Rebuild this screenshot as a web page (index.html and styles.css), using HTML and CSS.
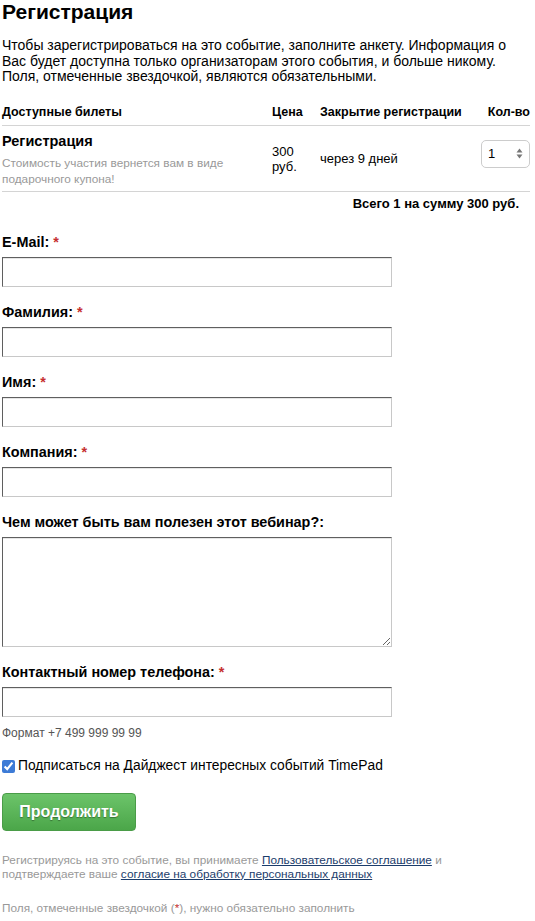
FILE: index.html
```html
<!DOCTYPE html>
<html lang="ru">
<head>
<meta charset="utf-8">
<title>Регистрация</title>
<link rel="stylesheet" href="styles.css">
</head>
<body>
<div class="page">
  <h1 class="title">Регистрация</h1>
  <p class="intro">Чтобы зарегистрироваться на это событие, заполните анкету. Информация о Вас будет доступна только организаторам этого события, и больше никому. Поля, отмеченные звездочкой, являются обязательными.</p>

  <table class="tickets">
    <colgroup>
      <col class="c-name"><col class="c-price"><col class="c-date"><col class="c-qty">
    </colgroup>
    <thead>
      <tr>
        <th>Доступные билеты</th>
        <th>Цена</th>
        <th>Закрытие регистрации</th>
        <th class="qty-h">Кол-во</th>
      </tr>
    </thead>
    <tbody>
      <tr>
        <td class="t-name">
          <div class="t-title">Регистрация</div>
          <div class="t-desc">Стоимость участия вернется вам в виде подарочного купона!</div>
        </td>
        <td class="t-price">300<br>руб.</td>
        <td class="t-date">через 9 дней</td>
        <td class="t-qty">
          <div class="qty-select"><span class="qty-val">1</span>
            <svg class="qty-arrows" width="7" height="11" viewBox="0 0 7 11"><path d="M3.5 0.5 L6.5 4.5 L0.5 4.5 Z" fill="#777"/><path d="M3.5 10.5 L6.5 6.5 L0.5 6.5 Z" fill="#777"/></svg>
          </div>
        </td>
      </tr>
    </tbody>
  </table>
  <div class="total">Всего 1 на сумму 300 руб.</div>

  <form class="form">
    <div class="field">
      <label class="label">E-Mail: <span class="req">*</span></label>
      <input class="input" type="text">
    </div>
    <div class="field">
      <label class="label">Фамилия: <span class="req">*</span></label>
      <input class="input" type="text">
    </div>
    <div class="field">
      <label class="label">Имя: <span class="req">*</span></label>
      <input class="input" type="text">
    </div>
    <div class="field">
      <label class="label">Компания: <span class="req">*</span></label>
      <input class="input" type="text">
    </div>
    <div class="field">
      <label class="label">Чем может быть вам полезен этот вебинар?:</label>
      <textarea class="textarea"></textarea>
    </div>
    <div class="field">
      <label class="label">Контактный номер телефона: <span class="req">*</span></label>
      <input class="input" type="text">
      <div class="hint">Формат +7 499 999 99 99</div>
    </div>
    <label class="subscribe"><input class="check" type="checkbox" checked> Подписаться на Дайджест интересных событий TimePad</label>
    <button class="btn" type="button">Продолжить</button>
    <p class="legal">Регистрируясь на это событие, вы принимаете <a href="#">Пользовательское соглашение</a> и подтверждаете ваше <a href="#">согласие на обработку персональных данных</a></p>
    <p class="note">Поля, отмеченные звездочкой (<span class="req">*</span>), нужно обязательно заполнить</p>
  </form>
</div>
</body>
</html>
```

FILE: styles.css
```css
html, body {
  margin: 0;
  padding: 0;
  background: #fff;
}
body {
  font-family: "Liberation Sans", Arial, Helvetica, sans-serif;
  color: #000;
}
.page {
  width: 528px;
  padding: 0 2px;
}
.title {
  margin: 0;
  font-size: 21px;
  line-height: 24px;
  font-weight: bold;
}
.intro {
  margin: 14px 0 0;
  font-size: 14px;
  line-height: 15.5px;
}
.tickets {
  margin-top: 14.5px;
  width: 528px;
  table-layout: fixed;
  border-collapse: collapse;
}
.c-name { width: 270px; }
.c-price { width: 48px; }
.c-date { width: 160px; }
.c-qty { width: 50px; }
.tickets th {
  text-align: left;
  font-size: 12.5px;
  line-height: 16px;
  font-weight: bold;
  padding: 5px 0 5px;
  border-bottom: 1px solid #d4d4d4;
  white-space: nowrap;
}
.tickets th.qty-h { text-align: right; }
.tickets td {
  border-bottom: 1px solid #d4d4d4;
  vertical-align: middle;
  padding: 0;
}
.t-name { padding: 6px 0 4px !important; vertical-align: top !important; }
.t-title {
  font-size: 14.5px;
  line-height: 18px;
  font-weight: bold;
}
.t-desc {
  margin-top: 5px;
  font-size: 11.8px;
  line-height: 16px;
  color: #999;
  width: 240px;
}
.t-price {
  font-size: 13px;
  line-height: 15px;
}
.t-date {
  font-size: 13px;
  line-height: 15px;
}
.t-qty { text-align: right; }
.qty-select {
  display: inline-flex;
  align-items: center;
  justify-content: space-between;
  box-sizing: border-box;
  width: 49px;
  height: 28px;
  margin-bottom: 10px;
  padding: 0 6px 0 6px;
  border: 1px solid #ccc;
  border-radius: 5px;
  background: #fff;
  font-size: 13px;
}
.total {
  text-align: right;
  padding: 4px 11px 0 0;
  font-size: 13px;
  line-height: 16px;
  font-weight: bold;
}
.form {
  margin-top: 22px;
}
.field {
  margin-bottom: 17px;
}
.label {
  display: block;
  font-size: 14.4px;
  line-height: 16px;
  font-weight: bold;
  margin-bottom: 7px;
}
.req {
  color: #c62f2f;
}
.input, .textarea {
  display: block;
  box-sizing: border-box;
  width: 390px;
  height: 30px;
  margin: 0;
  padding: 4px;
  border: 1px solid;
  border-color: #5f5f5f #c8c8c8 #c8c8c8 #5f5f5f;
  box-shadow: inset 0 1px 0 #e6e6e6;
  font-family: inherit;
  font-size: 13px;
  background: #fff;
}
.textarea {
  height: 110px;
  resize: both;
}
.hint {
  margin-top: 9px;
  font-size: 12px;
  line-height: 14px;
  color: #555;
}
.subscribe {
  display: flex;
  align-items: center;
  gap: 3px;
  font-size: 13.8px;
  line-height: 18px;
}
.check {
  margin: 0;
  width: 13px;
  height: 13px;
  accent-color: #3d7bd6;
}
.btn {
  display: block;
  margin-top: 18px;
  width: 134px;
  height: 38px;
  border: 1px solid #4a9c48;
  border-radius: 4px;
  background: linear-gradient(#6cc46a, #4ba649);
  color: #fff;
  font-family: inherit;
  font-size: 16px;
  font-weight: bold;
  text-shadow: 0 1px 1px rgba(0, 0, 0, 0.35);
  cursor: pointer;
  padding: 0;
}
.legal {
  margin: 21.5px 0 0;
  max-width: 470px;
  font-size: 11.8px;
  line-height: 14px;
  color: #999;
}
.legal a {
  color: #1b3c6b;
  text-decoration: underline;
}
.note {
  margin: 21px 0 0;
  font-size: 11.8px;
  line-height: 13px;
  color: #999;
}
```
